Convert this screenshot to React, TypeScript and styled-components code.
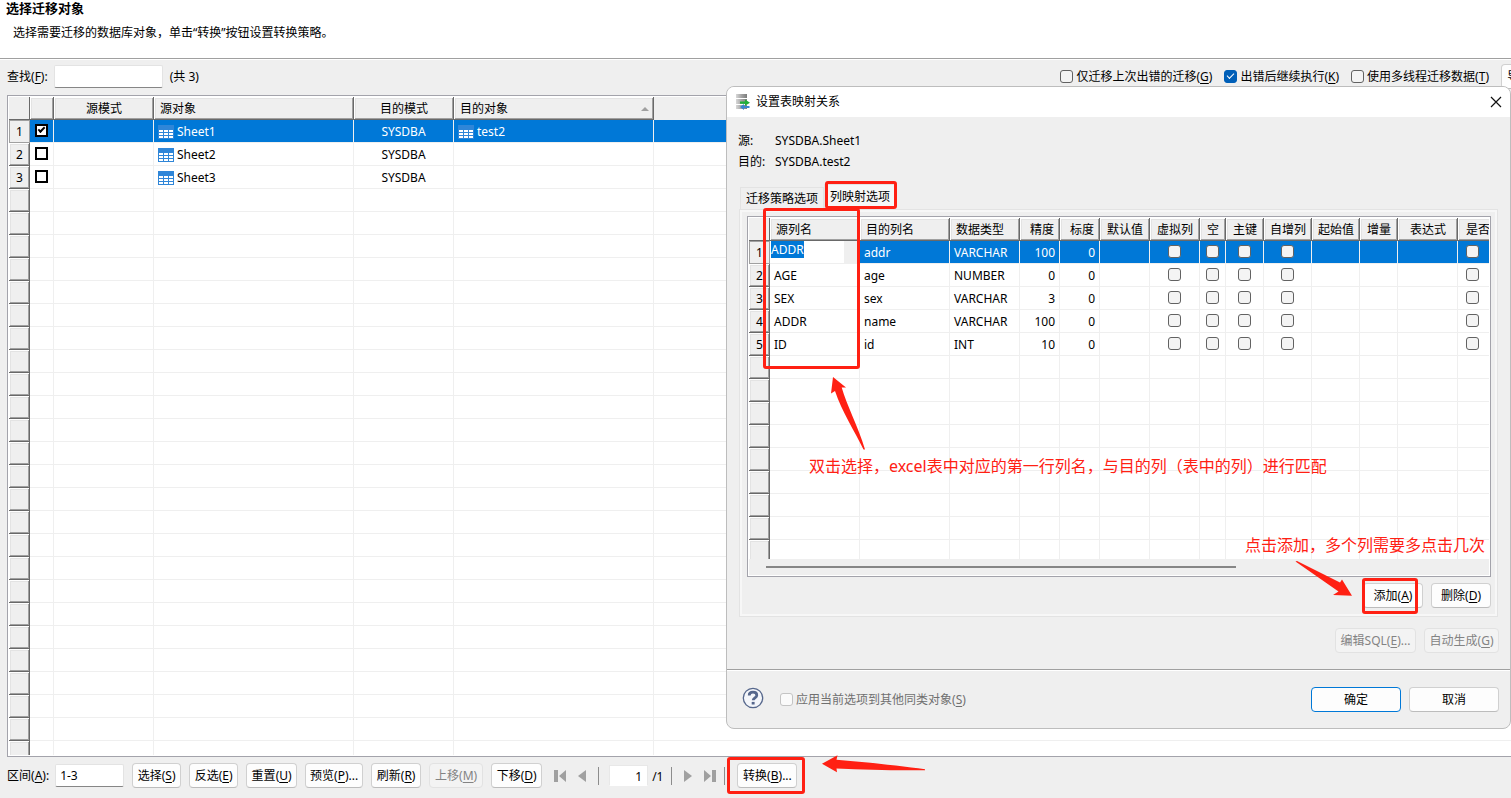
import React, { useEffect, useRef } from 'react';
import styled, { createGlobalStyle, css } from 'styled-components';

const red = '#ff2013';
const blue = '#0078d7';
const face = '#efefef';

const GlobalStyle = createGlobalStyle`
  *, *::before, *::after { box-sizing: border-box; }
  body { margin: 0; overflow: hidden; }
  body, button, input, table {
    font-family: "Noto Sans", "Noto Sans CJK SC", sans-serif;
    font-size: 12px;
    line-height: 16px;
    color: #000;
  }
  u { text-underline-offset: 2px; }
`;

/* ---------- shared controls ---------- */

const Page = styled.div`
  position: relative;
  display: flex;
  flex-direction: column;
  height: 100vh;
  overflow: hidden;
  background: ${face};
`;

const Button = styled.button<{ $w: number; $primary?: boolean }>`
  flex: none;
  width: ${p => p.$w}px;
  height: 25px;
  padding: 0;
  white-space: nowrap;
  background: #fdfdfd;
  border: 1px solid ${p => (p.$primary ? blue : '#d0d0d0')};
  border-bottom-color: ${p => (p.$primary ? blue : '#bcbcbc')};
  border-radius: 4px;
  &:disabled {
    color: #838383;
    background: #f3f3f3;
    border-color: #e2e2e2;
  }
`;

const TextInput = styled.input<{ $w: number }>`
  width: ${p => p.$w}px;
  height: 23px;
  padding: 0 4px;
  background: #fff;
  border: 1px solid #e3e3e3;
  border-bottom-color: #868686;
  border-radius: 2px;
  outline: none;
`;

const CheckBox = styled.input.attrs({ type: 'checkbox' })`
  appearance: none;
  display: block;
  flex: none;
  position: relative;
  width: 13px;
  height: 13px;
  margin: 0;
  background: #f4f4f4;
  border: 1px solid #626262;
  border-radius: 3px;
  &:checked {
    background: #005fb8;
    border-color: #005fb8;
  }
  &:checked::before {
    content: '';
    position: absolute;
    left: 2px;
    top: 2px;
    width: 7px;
    height: 4px;
    border: solid #fff;
    border-width: 0 0 1px 1px;
    transform: rotate(-45deg);
  }
  &:disabled {
    background: #fafafa;
    border-color: #c4c4c4;
  }
`;

const SquareCheck = styled(CheckBox)`
  background: #fff;
  border: 2px solid #000;
  border-radius: 0;
  &:checked {
    background: #fff;
    border-color: #000;
  }
  &:checked::before {
    left: 1px;
    top: 1px;
    border-color: #000;
    border-width: 0 0 2px 2px;
  }
`;

const CheckLabel = styled.label<{ $muted?: boolean }>`
  display: flex;
  align-items: center;
  gap: 3px;
  white-space: nowrap;
  color: ${p => (p.$muted ? '#707070' : '#000')};
`;

/* ---------- page header and tool bars ---------- */

const Header = styled.header`
  flex: none;
  height: 60px;
  background: #fff;
  border-bottom: 1px solid #fff;
  box-shadow: inset 0 -1px #a0a0a0;
`;

const Title = styled.h1`
  margin: 0;
  padding-left: 6px;
  font-size: 13px;
  line-height: 16px;
  font-weight: 700;
`;

const Subtitle = styled.p`
  margin: 9px 0 0;
  padding-left: 13px;
`;

const SearchBar = styled.div`
  flex: none;
  display: flex;
  align-items: center;
  height: 35px;
  padding: 0 0 2px 7px;
  margin-right: -60px;
  white-space: nowrap;
`;

const FieldLabel = styled.label`
  display: flex;
  align-items: center;
  gap: 6px;
  white-space: nowrap;
`;

const Count = styled.span`
  margin-left: 7px;
`;

const Options = styled.div`
  display: flex;
  align-items: center;
  gap: 12px;
  margin-left: auto;
`;

const BottomBar = styled.div`
  flex: none;
  display: flex;
  align-items: center;
  gap: 8px;
  height: 41px;
  padding: 0 0 4px 7px;
`;

const Pager = styled.div`
  display: flex;
  align-items: center;
  gap: 12px;
  padding-left: 4px;
`;

const PagerButton = styled.button`
  display: block;
  flex: none;
  padding: 0;
  border: 0;
  background: none;
  svg { display: block; fill: #a0a0a0; }
`;

const Separator = styled.span`
  width: 1px;
  height: 18px;
  background: #8c8c8c;
`;

const PageNumber = styled.input`
  width: 39px;
  height: 21px;
  margin-left: -2px;
  padding: 2px 5px 0;
  text-align: right;
  background: #fff;
  border: 1px solid #e8e8e8;
  border-bottom-color: #fff;
`;

const PageTotal = styled.span`
  margin: 2px -4px 0 -8px;
`;

const Marked = styled.div`
  position: relative;
  margin-left: 4px;
`;

/* ---------- grids ---------- */

const GridFrame = styled.div<{ $fill?: boolean }>`
  display: flex;
  flex-direction: column;
  min-height: 0;
  padding: 1px;
  background: #fff;
  border: 1px solid #a3a3ab;
  ${p =>
    p.$fill
      ? css`
          flex: 1;
          margin-left: 7px;
          border-right: 0;
          padding-right: 0;
        `
      : css`
          height: 361px;
        `}
`;

const GridView = styled.div`
  flex: 1;
  min-height: 0;
  overflow: hidden;
`;

const Table = styled.table<{ $w?: number }>`
  width: ${p => (p.$w ? `${p.$w}px` : '100%')};
  table-layout: fixed;
  border-collapse: separate;
  border-spacing: 0;
`;

type Align = 'left' | 'center' | 'right';

const raised = css`
  box-shadow: inset -1px -1px #696969, inset 1px 1px #fff, inset -2px -2px #a0a0a0, inset 2px 2px #e3e3e3;
`;

const ColHead = styled.th<{ $align?: Align; $flat?: boolean; $pad?: number }>`
  height: 23px;
  padding: 0 ${p => p.$pad ?? 6}px;
  position: relative;
  font-weight: 400;
  white-space: nowrap;
  overflow: hidden;
  background: ${face};
  text-align: ${p => p.$align ?? 'center'};
  ${p => !p.$flat && raised}
`;

const Corner = styled.td`
  height: 23px;
  padding: 0;
  background: ${face};
  box-shadow: inset -1px -1px #696969;
`;

const RowHead = styled.th<{ $current?: boolean }>`
  height: 23px;
  padding: 0;
  font-weight: 400;
  text-align: center;
  background: ${face};
  ${p =>
    p.$current
      ? css`
          box-shadow: inset 0 0 0 1px #a0a0a0;
        `
      : raised}
`;

const Row = styled.tr<{ $selected?: boolean }>`
  background: ${p => (p.$selected ? blue : '#fff')};
  color: ${p => (p.$selected ? '#fff' : '#000')};
`;

const Cell = styled.td<{ $align?: Align; $pad?: number; $last?: boolean; $check?: boolean }>`
  height: 23px;
  padding: ${p => (p.$check ? 0 : 2)}px ${p => p.$pad ?? 4}px ${p => (p.$check ? 2 : 0)}px;
  text-align: ${p => p.$align ?? 'left'};
  white-space: nowrap;
  border: solid ${face};
  border-width: 0 ${p => (p.$last ? 0 : 1)}px 1px 0;
  input[type='checkbox'] { margin: ${p => (p.$align === 'center' ? '0 auto' : '0')}; }
`;

const ObjectName = styled.span`
  display: flex;
  align-items: center;
  gap: 3px;
`;

const SortMark = styled.svg`
  position: absolute;
  right: 5px;
  top: 10px;
  fill: #a0a0a0;
`;

const EditCell = styled.td`
  height: 23px;
  padding: 0 15px 0 0;
  background: ${face};
  border: solid ${face};
  border-width: 0 1px 1px 0;
  vertical-align: top;
`;

const Editor = styled.input`
  display: block;
  width: 100%;
  height: 22px;
  padding: 0 1px 5px;
  border: 0;
  outline: none;
  background: #fff;
  &::selection { background: ${blue}; color: #fff; }
`;

const ScrollTrack = styled.div`
  flex: none;
  height: 16px;
  padding: 7px 0 0 17px;
  background: ${face};
`;

const ScrollThumb = styled.div`
  width: 65%;
  height: 2px;
  background: #868686;
`;

/* ---------- dialog ---------- */

const Dialog = styled.section`
  position: absolute;
  top: 86px;
  right: 0;
  width: 785px;
  background: ${face};
  border: 1px solid #bdbdbd;
  border-radius: 8px;
`;

const DialogTitle = styled.header`
  display: flex;
  align-items: center;
  height: 30px;
  padding: 0 8px 0 9px;
  background: #fff;
  border-radius: 7px 7px 0 0;
`;

const DialogName = styled.h2`
  flex: 1;
  margin: 0 0 0 5px;
  font-size: 12px;
  line-height: 16px;
  font-weight: 400;
`;

const CloseButton = styled.button`
  padding: 0;
  border: 0;
  background: none;
  svg { display: block; }
`;

const Facts = styled.dl`
  display: grid;
  grid-template-columns: 37px 1fr;
  margin: 13px 11px 12px;
  line-height: 21px;
  dt, dd { margin: 0; }
`;

const Tabs = styled.div`
  display: flex;
  align-items: flex-end;
  height: 25px;
  margin: 0 13px;
`;

const Tab = styled.button<{ $active?: boolean }>`
  height: ${p => (p.$active ? 25 : 22)}px;
  padding: 0 5px;
  border: 1px solid #e3e3e3;
  border-bottom: 0;
  background: ${p => (p.$active ? '#f6f6f6' : face)};
`;

const TabPanel = styled.div`
  margin: 0 12px;
  padding: 6px 6px 8px 7px;
  border: 1px solid #e3e3e3;
  box-shadow: inset 0 0 0 2px #f7f7f7;
`;

const Actions = styled.div<{ $top: number; $right?: number }>`
  display: flex;
  justify-content: flex-end;
  gap: 8px;
  padding: ${p => p.$top}px ${p => p.$right ?? 0}px 0 0;
`;

const DialogFooter = styled.footer`
  display: flex;
  align-items: center;
  gap: 8px;
  margin-top: 16px;
  padding: 17px 11px 16px 15px;
  border-top: 1px solid #a0a0a0;
  box-shadow: inset 0 1px #fff;
`;

const FooterLabel = styled(CheckLabel)`
  margin: 0 auto 0 8px;
`;

const HelpButton = styled.button`
  align-self: flex-start;
  padding: 0;
  border: 0;
  background: none;
  svg { display: block; }
`;

/* ---------- review marks drawn over the windows ---------- */

const Frame = styled.span<{ $x: number; $y: number; $w: number; $h: number }>`
  position: absolute;
  left: ${p => p.$x}px;
  top: ${p => p.$y}px;
  width: ${p => p.$w}px;
  height: ${p => p.$h}px;
  border: 3px solid ${red};
  border-radius: 3px;
  pointer-events: none;
`;

const Note = styled.p<{ $x: number; $y: number }>`
  position: absolute;
  left: ${p => p.$x}px;
  top: ${p => p.$y}px;
  margin: 0;
  font-size: 16px;
  line-height: 24px;
  color: ${red};
  white-space: nowrap;
  pointer-events: none;
`;

const Arrow = styled.svg<{ $x: number; $y: number }>`
  position: absolute;
  left: ${p => p.$x}px;
  top: ${p => p.$y}px;
  fill: ${red};
  pointer-events: none;
`;

/* ---------- icons ---------- */

const TableIcon = () => (
  <svg width="16" height="14" viewBox="0 0 16 14" shapeRendering="crispEdges" aria-hidden="true">
    <rect width="16" height="14" fill="#2f86d8" />
    {[5, 8, 11].map(y =>
      [1, 6, 11].map(x => <rect key={`${x}-${y}`} x={x} y={y} width="4" height="2" fill="#fff" />)
    )}
  </svg>
);

const MappingIcon = () => (
  <svg width="15" height="16" viewBox="0 0 15 16" aria-hidden="true">
    <defs>
      <linearGradient id="drum" x1="0" x2="1">
        <stop offset="0" stopColor="#d8d8d8" />
        <stop offset="0.5" stopColor="#a4a4a4" />
        <stop offset="1" stopColor="#7c7c7c" />
      </linearGradient>
    </defs>
    <rect x="0" y="0" width="11" height="4" fill="url(#drum)" />
    <rect x="0" y="5" width="11" height="5" fill="url(#drum)" />
    <rect x="0" y="11" width="11" height="4" fill="url(#drum)" />
    <path d="M4 7.500h5V5.500l5 3.200-5 3v-2H4z" fill="#1fae3a" />
    <path d="M13.500 12H8v-2l-4 3 4 3v-2h5.500z" fill="#3a86d0" />
  </svg>
);

/* ---------- data ---------- */

const objects = [
  { source: 'Sheet1', schema: 'SYSDBA', target: 'test2' },
  { source: 'Sheet2', schema: 'SYSDBA', target: '' },
  { source: 'Sheet3', schema: 'SYSDBA', target: '' },
];

const mappings = [
  ['ADDR', 'addr', 'VARCHAR', '100', '0'],
  ['AGE', 'age', 'NUMBER', '0', '0'],
  ['SEX', 'sex', 'VARCHAR', '3', '0'],
  ['ADDR', 'name', 'VARCHAR', '100', '0'],
  ['ID', 'id', 'INT', '10', '0'],
];

interface Column {
  name: string;
  width: number;
  head: Align;
  body: Align;
  check?: boolean;
  pad?: number;
}

const columns: Column[] = [
  { name: '源列名', width: 90, head: 'left', body: 'left' },
  { name: '目的列名', width: 90, head: 'left', body: 'left' },
  { name: '数据类型', width: 70, head: 'left', body: 'left' },
  { name: '精度', width: 40, head: 'right', body: 'right' },
  { name: '标度', width: 40, head: 'right', body: 'right' },
  { name: '默认值', width: 50, head: 'center', body: 'left' },
  { name: '虚拟列', width: 50, head: 'center', body: 'center', check: true },
  { name: '空', width: 26, head: 'center', body: 'center', check: true },
  { name: '主键', width: 38, head: 'center', body: 'center', check: true },
  { name: '自增列', width: 48, head: 'center', body: 'center', check: true },
  { name: '起始值', width: 48, head: 'center', body: 'left' },
  { name: '增量', width: 38, head: 'center', body: 'left' },
  { name: '表达式', width: 60, head: 'center', body: 'left' },
  { name: '是否', width: 60, head: 'left', body: 'left', check: true, pad: 8 },
];

const range = (n: number) => Array.from({ length: n }, (_, i) => i);

const Key = ({ k }: { k: string }) => (
  <>
    (<u>{k}</u>)
  </>
);

/* ---------- views ---------- */

const ObjectGrid = () => (
  <GridFrame $fill>
    <GridView>
      <Table>
        <colgroup>
          {[21, 24, 100, 200, 100, 200].map((w, i) => (
            <col key={i} style={{ width: w }} />
          ))}
          <col />
        </colgroup>
        <thead>
          <tr>
            <Corner />
            <ColHead />
            <ColHead>源模式</ColHead>
            <ColHead $align="left">源对象</ColHead>
            <ColHead>目的模式</ColHead>
            <ColHead $align="left">
              目的对象
              <SortMark width="8" height="4" viewBox="0 0 8 4" aria-hidden="true">
                <path d="M4 0l4 4H0z" />
              </SortMark>
            </ColHead>
            <ColHead $flat />
          </tr>
        </thead>
        <tbody>
          {range(28).map(i => {
            const o = objects[i];
            return (
              <Row key={i} $selected={i === 0}>
                <RowHead scope="row" $current={i === 0} style={{ color: '#000' }}>
                  {o ? i + 1 : ''}
                </RowHead>
                <Cell $align="center" $check>
                  {o && <SquareCheck defaultChecked={i === 0} aria-label={`选择 ${o.source}`} />}
                </Cell>
                <Cell />
                <Cell>
                  {o && (
                    <ObjectName>
                      <TableIcon />
                      {o.source}
                    </ObjectName>
                  )}
                </Cell>
                <Cell $align="center">{o?.schema}</Cell>
                <Cell>
                  {o?.target && (
                    <ObjectName>
                      <TableIcon />
                      {o.target}
                    </ObjectName>
                  )}
                </Cell>
                <Cell $last />
              </Row>
            );
          })}
        </tbody>
      </Table>
    </GridView>
  </GridFrame>
);

const MappingGrid = () => {
  const editor = useRef<HTMLInputElement>(null);
  useEffect(() => {
    editor.current?.focus();
    editor.current?.select();
  }, []);
  const total = columns.reduce((sum, c) => sum + c.width, 21);
  return (
    <GridFrame>
      <GridView>
        <Table $w={total}>
          <colgroup>
            <col style={{ width: 21 }} />
            {columns.map(c => (
              <col key={c.name} style={{ width: c.width }} />
            ))}
          </colgroup>
          <thead>
            <tr>
              <Corner />
              {columns.map(c => (
                <ColHead key={c.name} $align={c.head} $pad={c.pad ?? (c.head === 'center' ? 0 : 6)}>
                  {c.name}
                </ColHead>
              ))}
            </tr>
          </thead>
          <tbody>
            {range(14).map(i => {
              const row = mappings[i];
              return (
                <Row key={i} $selected={i === 0}>
                  <RowHead scope="row" $current={i === 0} style={{ color: '#000' }}>
                    {row ? i + 1 : ''}
                  </RowHead>
                  {columns.map((c, j) =>
                    i === 0 && j === 0 ? (
                      <EditCell key={c.name}>
                        <Editor ref={editor} defaultValue={row[0]} aria-label={c.name} />
                      </EditCell>
                    ) : (
                      <Cell key={c.name} $align={c.body} $pad={c.pad} $check={c.check}>
                        {row && (c.check ? <CheckBox aria-label={c.name} /> : row[j])}
                      </Cell>
                    )
                  )}
                </Row>
              );
            })}
          </tbody>
        </Table>
      </GridView>
      <ScrollTrack>
        <ScrollThumb />
      </ScrollTrack>
    </GridFrame>
  );
};

const MappingDialog = () => (
  <Dialog role="dialog" aria-label="设置表映射关系">
    <DialogTitle>
      <MappingIcon />
      <DialogName>设置表映射关系</DialogName>
      <CloseButton aria-label="关闭">
        <svg width="12" height="12" viewBox="0 0 12 12" stroke="#111" strokeWidth="1.2">
          <path d="M1 1l10 10M11 1L1 11" />
        </svg>
      </CloseButton>
    </DialogTitle>
    <Facts>
      <dt>源:</dt>
      <dd>SYSDBA.Sheet1</dd>
      <dt>目的:</dt>
      <dd>SYSDBA.test2</dd>
    </Facts>
    <Tabs role="tablist">
      <Tab role="tab">迁移策略选项</Tab>
      <Tab role="tab" aria-selected $active>
        列映射选项
      </Tab>
    </Tabs>
    <TabPanel role="tabpanel">
      <MappingGrid />
      <Actions $top={6}>
        <Button $w={60}>
          添加
          <Key k="A" />
        </Button>
        <Button $w={60}>
          删除
          <Key k="D" />
        </Button>
      </Actions>
    </TabPanel>
    <Actions $top={11} $right={11}>
      <Button $w={81} disabled>
        编辑SQL
        <Key k="E" />
        ...
      </Button>
      <Button $w={75} disabled>
        自动生成
        <Key k="G" />
      </Button>
    </Actions>
    <DialogFooter>
      <HelpButton aria-label="帮助">
        <svg width="22" height="22" viewBox="0 0 22 22" fill="none" stroke="#56678c">
          <circle cx="11" cy="11" r="9.7" fill="#f4f6fa" strokeWidth="1.3" />
          <path d="M7.2 8.4C7.2 6.2 9 5.2 11 5.2s3.800 1 3.800 3c0 2.500-3.600 2.700-3.600 5" strokeWidth="2.800" />
          <path d="M9.700 16.200h2.900" strokeWidth="2.600" />
        </svg>
      </HelpButton>
      <FooterLabel $muted>
        <CheckBox disabled />
        <span>
          应用当前选项到其他同类对象
          <Key k="S" />
        </span>
      </FooterLabel>
      <Button $w={90} $primary>
        确定
      </Button>
      <Button $w={90}>取消</Button>
    </DialogFooter>

    <Frame $x={98} $y={94} $w={72} $h={28} />
    <Frame $x={36} $y={121} $w={97} $h={161} />
    <Frame $x={635} $y={491} $w={56} $h={36} />
    <Arrow $x={103} $y={289} width="38" height="76" viewBox="0 0 38 76">
      <path d="M3 1L16 11.500L11.700 11.500C17 30 28 50 35 73.500L33.500 73.500C24 54 12 36 5 15L1 17.500Z" />
    </Arrow>
    <Arrow $x={568} $y={473} width="58" height="38" viewBox="0 0 58 38">
      <path d="M.5 1.500L2 1L45 22.500L47 19.500L57 35.700L38 35L43.500 31.500Z" />
    </Arrow>
    <Note $x={82} $y={367}>
      双击选择，excel表中对应的第一行列名，与目的列（表中的列）进行匹配
    </Note>
    <Note $x={518} $y={446}>
      点击添加，多个列需要多点击几次
    </Note>
  </Dialog>
);

const commands = [
  { text: '选择', k: 'S', w: 49 },
  { text: '反选', k: 'E', w: 49 },
  { text: '重置', k: 'U', w: 51 },
  { text: '预览', k: 'P', w: 58, more: true },
  { text: '刷新', k: 'R', w: 50 },
  { text: '上移', k: 'M', w: 54, off: true },
  { text: '下移', k: 'D', w: 51 },
];

export default function App() {
  return (
    <Page>
      <GlobalStyle />
      <Header>
        <Title>选择迁移对象</Title>
        <Subtitle>选择需要迁移的数据库对象，单击“转换”按钮设置转换策略。</Subtitle>
      </Header>
      <SearchBar>
        <FieldLabel>
          <span>
            查找
            <Key k="F" />:
          </span>
          <TextInput $w={109} />
        </FieldLabel>
        <Count>(共 3)</Count>
        <Options>
          <CheckLabel>
            <CheckBox />
            <span>
              仅迁移上次出错的迁移
              <Key k="G" />
            </span>
          </CheckLabel>
          <CheckLabel>
            <CheckBox defaultChecked />
            <span>
              出错后继续执行
              <Key k="K" />
            </span>
          </CheckLabel>
          <CheckLabel>
            <CheckBox />
            <span>
              使用多线程迁移数据
              <Key k="T" />
            </span>
          </CheckLabel>
          <Button $w={70}>导出脚本...</Button>
        </Options>
      </SearchBar>
      <ObjectGrid />
      <BottomBar>
        <FieldLabel>
          <span>
            区间
            <Key k="A" />:
          </span>
          <TextInput $w={69} defaultValue="1-3" />
        </FieldLabel>
        {commands.map(c => (
          <Button key={c.k} $w={c.w} disabled={c.off}>
            {c.text}
            <Key k={c.k} />
            {c.more && '...'}
          </Button>
        ))}
        <Pager>
          <PagerButton aria-label="首页">
            <svg width="12" height="12" viewBox="0 0 12 12">
              <path d="M0 0h4v12H0zM12 0v12L5 6z" />
            </svg>
          </PagerButton>
          <PagerButton aria-label="上一页">
            <svg width="8" height="12" viewBox="0 0 8 12">
              <path d="M8 0v12L0 6z" />
            </svg>
          </PagerButton>
          <Separator />
          <PageNumber defaultValue="1" aria-label="页码" />
          <PageTotal>/1</PageTotal>
          <Separator />
          <PagerButton aria-label="下一页">
            <svg width="8" height="12" viewBox="0 0 8 12">
              <path d="M0 0v12l8-6z" />
            </svg>
          </PagerButton>
          <PagerButton aria-label="末页">
            <svg width="12" height="12" viewBox="0 0 12 12">
              <path d="M8 0h4v12H8zM0 0v12l7-6z" />
            </svg>
          </PagerButton>
        </Pager>
        <Separator />
        <Marked>
          <Button $w={60}>
            转换
            <Key k="B" />
            ...
          </Button>
          <Frame $x={-10} $y={-6} $w={78} $h={37} />
          <Arrow $x={84} $y={-9} width="106" height="20" viewBox="0 0 106 20">
            <path d="M1 9.700L16.500 1.300L15.500 5.700C45 8 80 12 104 15.200L104 16.200C75 16.500 45 16 15.500 14.500L16 18.300Z" />
          </Arrow>
        </Marked>
      </BottomBar>
      <MappingDialog />
    </Page>
  );
}
